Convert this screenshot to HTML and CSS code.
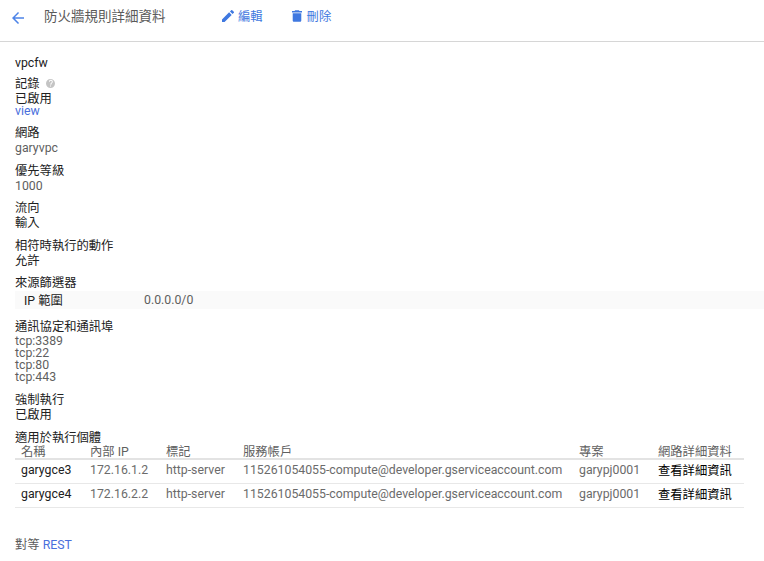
FILE: index.html
```html
<!DOCTYPE html>
<html lang="zh-Hant">
<head>
  <meta charset="UTF-8" />
  <title>防火牆規則詳細資料</title>
  <link rel="stylesheet" href="styles.css">
</head>
<body>
  <div class="top-bar">
    <svg class="back" width="12" height="12" viewBox="0 0 16 16"><path d="M16 7H3.800l5.600-5.600L8 0 0 8l8 8 1.400-1.400L3.800 9H16z"/></svg>
    <h1 class="title">防火牆規則詳細資料</h1>
    <a class="action action-edit">
      <svg width="12" height="12" viewBox="0 0 14 14"><path d="M0 11v3h3l8.300-8.300-3-3zM13.800 3.200c.3-.3.3-.8 0-1.100L11.900.2c-.3-.3-.8-.3-1.100 0L9.300 1.700l3 3z"/></svg>
      編輯
    </a>
    <a class="action action-delete">
      <svg width="10" height="12" viewBox="0 0 14 16"><path d="M1 14.200c0 1 .8 1.800 1.800 1.800h8.400c1 0 1.800-.8 1.800-1.800V4H1zM14 1h-3.500l-1-1h-5l-1 1H0v2h14z"/></svg>
      刪除
    </a>
  </div>

  <div class="content">
    <div class="field name">vpcfw</div>

    <div class="field">
      <div class="label">記錄 <svg class="help" width="9" height="9" viewBox="0 0 24 24"><path d="M12 0a12 12 0 1 0 0 24 12 12 0 0 0 0-24zm1.300 20h-2.600v-2.600h2.600zm2.700-8.500c-1 1-1.700 1.700-1.700 3.500h-2.600v-.6c0-1.400.5-2.700 1.500-3.600l1.600-1.600c.5-.5.800-1.100.8-1.800a2.600 2.600 0 0 0-5.200 0H7.800a5.200 5.200 0 0 1 10.400 0c0 1.600-.9 2.900-2.200 4.100z"/></svg></div>
      <div class="value">已啟用</div>
      <a class="link tight view-link">view</a>
    </div>

    <div class="field">
      <div class="label">網路</div>
      <div class="value muted">garyvpc</div>
    </div>

    <div class="field">
      <div class="label">優先等級</div>
      <div class="value muted">1000</div>
    </div>

    <div class="field">
      <div class="label">流向</div>
      <div class="value">輸入</div>
    </div>

    <div class="field">
      <div class="label">相符時執行的動作</div>
      <div class="value">允許</div>
    </div>

    <div class="field filter">
      <div class="label">來源篩選器</div>
      <div class="filter-row">
        <span class="filter-key">IP 範圍</span>
        <span class="muted">0.0.0.0/0</span>
      </div>
    </div>

    <div class="field ports">
      <div class="label">通訊協定和通訊埠</div>
      <div class="tight muted">tcp:3389</div>
      <div class="tight muted">tcp:22</div>
      <div class="tight muted">tcp:80</div>
      <div class="tight muted">tcp:443</div>
    </div>

    <div class="field">
      <div class="label">強制執行</div>
      <div class="value">已啟用</div>
    </div>

    <div class="label">適用於執行個體</div>
    <table class="instances">
      <thead>
        <tr>
          <th class="col-name">名稱</th>
          <th class="col-ip">內部 IP</th>
          <th class="col-tag">標記</th>
          <th class="col-account">服務帳戶</th>
          <th class="col-project">專案</th>
          <th>網路詳細資料</th>
        </tr>
      </thead>
      <tbody>
        <tr>
          <td class="strong">garygce3</td>
          <td>172.16.1.2</td>
          <td>http-server</td>
          <td>115261054055-compute@developer.gserviceaccount.com</td>
          <td>garypj0001</td>
          <td class="strong details">查看詳細資訊</td>
        </tr>
        <tr>
          <td class="strong">garygce4</td>
          <td>172.16.2.2</td>
          <td>http-server</td>
          <td>115261054055-compute@developer.gserviceaccount.com</td>
          <td>garypj0001</td>
          <td class="strong details">查看詳細資訊</td>
        </tr>
      </tbody>
    </table>

    <div class="equivalent">對等 <a class="link">REST</a></div>
  </div>
</body>
</html>
```

FILE: styles.css
```css
body {
  margin: 0;
  font-family: Roboto, "Noto Sans CJK TC", sans-serif;
  font-size: 12.3px;
  color: #212121;
  background: #fff;
}

.top-bar {
  display: flex;
  align-items: center;
  box-sizing: border-box;
  height: 42px;
  padding-left: 12px;
  padding-bottom: 8px;
  border-bottom: 1px solid #d6d6d6;
}

.back {
  fill: #4d84e8;
  margin-top: 2px;
  margin-right: 20px;
  flex: none;
}

.title {
  width: 178px;
  margin: 0;
  font-size: 13.5px;
  font-weight: 400;
  line-height: 16px;
  margin-top: -1px;
  color: #5a5a5a;
}

.action {
  display: flex;
  align-items: center;
  gap: 4px;
  margin-top: -2px;
  color: #3f78e0;
}

.action svg {
  fill: #3f78e0;
}

.action-edit {
  margin-right: 29px;
}

.action-delete {
  gap: 5px;
}

.content {
  padding: 14px 0 0 15px;
}

.field {
  margin-bottom: 7.5px;
}

.name {
  line-height: 15px;
  margin-bottom: 6px;
}

.label {
  line-height: 15px;
}

.value {
  line-height: 15px;
}

.tight {
  display: block;
  line-height: 12px;
}

.view-link {
  margin-top: -2px;
  padding-bottom: 1.5px;
}

.muted {
  color: #5f5f5f;
}

.link {
  color: #4a6fdc;
}

.help {
  fill: #c4c4c4;
  margin-left: 3px;
}

.filter {
  margin-bottom: 10.5px;
}

.filter-row {
  display: flex;
  align-items: center;
  height: 18px;
  background: #fafafa;
}

.filter-key {
  width: 120px;
  padding-left: 9px;
}

.ports {
  margin-bottom: 10.5px;
}

.instances {
  width: 729px;
  border-collapse: collapse;
  table-layout: fixed;
}

.instances th {
  height: 12px;
  padding: 0 0 0 6px;
  font-weight: 400;
  text-align: left;
  line-height: 12px;
  color: #5f5f5f;
  border-bottom: 2px solid #e3e3e3;
}

.instances td {
  height: 21px;
  padding: 0 0 2px 6px;
  color: #6b6b6b;
  white-space: nowrap;
  border-bottom: 1px solid #e8e8e8;
}

.instances td.strong {
  color: #212121;
}

.instances td.details {
  color: #000;
}

.col-name { width: 63px; }
.col-ip { width: 70px; }
.col-tag { width: 71px; }
.col-account { width: 330px; }
.col-project { width: 73px; }

.equivalent {
  margin-top: 27px;
  color: #5a5a5a;
}
```
